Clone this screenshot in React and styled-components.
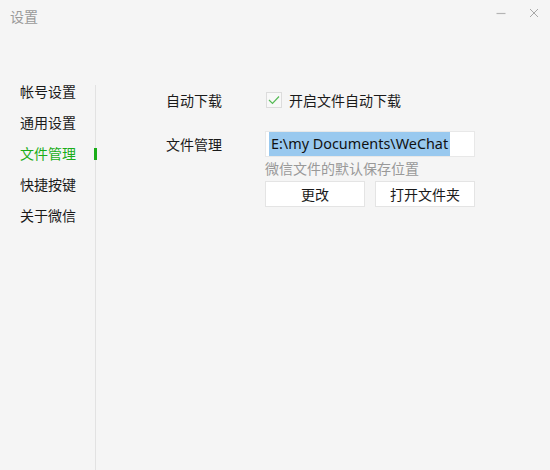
import React from "react";
import styled, { createGlobalStyle } from "styled-components";

const Global = createGlobalStyle`
  html, body, #root { height: 100%; margin: 0; padding: 0; }
  body {
    background: #f5f5f5;
    font-family: "Noto Sans CJK SC", "Noto Sans", sans-serif;
    -webkit-font-smoothing: antialiased;
  }
  * { box-sizing: border-box; }
`;

const Window = styled.div`
  width: 550px;
  height: 470px;
  background: #f5f5f5;
  display: flex;
  flex-direction: column;
  overflow: hidden;
`;

const TitleBar = styled.div`
  height: 32px;
  display: flex;
  align-items: center;
  padding-left: 10px;
  flex-shrink: 0;
`;

const Title = styled.div`
  font-size: 14px;
  line-height: 32px;
  color: #9a9a9a;
  flex: 1;
`;

const WinButtons = styled.div`
  display: flex;
  align-items: center;
  height: 32px;
`;

const WinButton = styled.div`
  width: 33px;
  height: 26px;
  display: flex;
  align-items: center;
  justify-content: center;
  margin-top: -7px;
  color: #a0a0a0;
`;

const Body = styled.div`
  flex: 1;
  display: flex;
  min-height: 0;
`;

const Nav = styled.nav`
  width: 95px;
  padding-top: 44px;
  display: flex;
  flex-direction: column;
  flex-shrink: 0;
`;

const NavItem = styled.div`
  position: relative;
  height: 31px;
  line-height: 31px;
  padding-left: 20px;
  font-size: 14px;
  color: ${(p) => (p.$active ? "#1aad19" : "#1a1a1a")};
`;

const Indicator = styled.span`
  position: absolute;
  right: -2px;
  top: 10px;
  width: 3px;
  height: 12px;
  background: #1aad19;
`;

const Divider = styled.div`
  width: 1px;
  margin-top: 53px;
  background: #e2e2e2;
  flex-shrink: 0;
`;

const Content = styled.div`
  flex: 1;
  padding: 58px 0 0 70px;
  display: flex;
  flex-direction: column;
  gap: 21px;
`;

const Row = styled.div`
  display: grid;
  grid-template-columns: 99px 210px;
  align-items: start;
`;

const Label = styled.div`
  font-size: 14px;
  line-height: ${(p) => p.$lh || 20}px;
  color: #1a1a1a;
`;

const CheckRow = styled.label`
  display: flex;
  align-items: center;
  height: 20px;
  gap: 7px;
  font-size: 14px;
  color: #1a1a1a;
`;

const CheckBox = styled.span`
  width: 16px;
  height: 16px;
  border: 1px solid #dcdcdc;
  background: #f8f8f8;
  display: flex;
  align-items: center;
  justify-content: center;
  margin-left: 1px;
`;

const Controls = styled.div`
  display: flex;
  flex-direction: column;
`;

const PathBox = styled.div`
  width: 210px;
  height: 26px;
  background: #fff;
  border: 1px solid #e8e8e8;
  padding: 0 0 0 3px;
  display: flex;
  align-items: stretch;
`;

const Selected = styled.span`
  background: #99c9ef;
  color: #111;
  font-family: "Noto Sans", "Open Sans", sans-serif;
  font-size: 14.4px;
  line-height: 24px;
  padding: 0 2px;
  white-space: nowrap;
`;

const Hint = styled.div`
  font-size: 14px;
  line-height: 22px;
  color: #999;
`;

const Buttons = styled.div`
  display: flex;
  gap: 10px;
  margin-top: 2px;
`;

const Button = styled.button`
  width: 100px;
  height: 26px;
  background: #fff;
  border: 1px solid #e4e4e4;
  font-family: "Noto Sans CJK SC", sans-serif;
  font-size: 14px;
  color: #1a1a1a;
  padding: 0;
  line-height: 24px;
`;

const navItems = ["帐号设置", "通用设置", "文件管理", "快捷按键", "关于微信"];

export default function App() {
  return (
    <>
      <Global />
      <Window>
        <TitleBar>
          <Title>设置</Title>
          <WinButtons>
            <WinButton>
              <svg width="10" height="10" viewBox="0 0 10 10">
                <line x1="0.5" y1="5.5" x2="9.5" y2="5.5" stroke="#b4b4b4" strokeWidth="1.2" />
              </svg>
            </WinButton>
            <WinButton>
              <svg width="10" height="10" viewBox="0 0 10 10">
                <path d="M1 1 L9 9 M9 1 L1 9" stroke="#a8a8a8" strokeWidth="1" fill="none" />
              </svg>
            </WinButton>
          </WinButtons>
        </TitleBar>
        <Body>
          <Nav>
            {navItems.map((t) => (
              <NavItem key={t} $active={t === "文件管理"}>
                {t}
                {t === "文件管理" && <Indicator />}
              </NavItem>
            ))}
          </Nav>
          <Divider />
          <Content>
            <Row>
              <Label>自动下载</Label>
              <CheckRow>
                <CheckBox>
                  <svg width="12" height="10" viewBox="0 0 12 10">
                    <polyline points="1,5 4.5,8.5 11,1.5" fill="none" stroke="#56bb56" strokeWidth="1.2" />
                  </svg>
                </CheckBox>
                开启文件自动下载
              </CheckRow>
            </Row>
            <Row>
              <Label $lh={26}>文件管理</Label>
              <Controls>
                <PathBox>
                  <Selected>E:\my Documents\WeChat</Selected>
                </PathBox>
                <Hint>微信文件的默认保存位置</Hint>
                <Buttons>
                  <Button>更改</Button>
                  <Button>打开文件夹</Button>
                </Buttons>
              </Controls>
            </Row>
          </Content>
        </Body>
      </Window>
    </>
  );
}
